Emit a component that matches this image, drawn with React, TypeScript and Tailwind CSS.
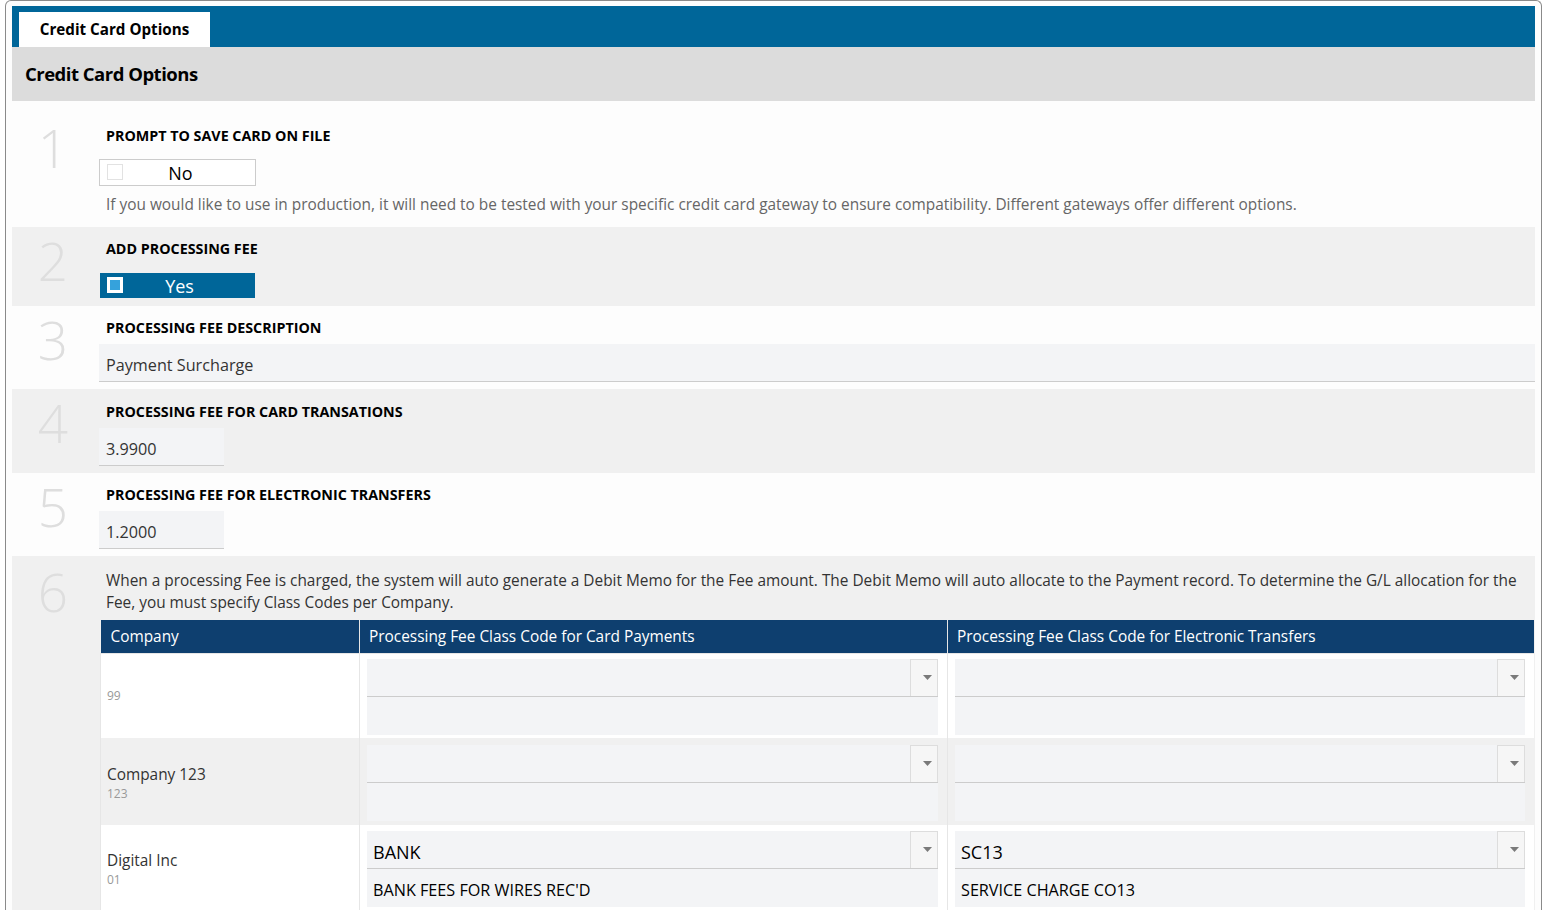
const FONT = "font-['Open_Sans','Noto_Sans',sans-serif]";

type CompanyRow = {
  name: string;
  code: string;
  pad: string;
  card: { code: string; desc: string };
  electronic: { code: string; desc: string };
};

const companies: CompanyRow[] = [
  { name: "", code: "99", pad: "pt-[5px] pb-[3px]", card: { code: "", desc: "" }, electronic: { code: "", desc: "" } },
  { name: "Company 123", code: "123", pad: "pt-[7px] pb-[4px]", card: { code: "", desc: "" }, electronic: { code: "", desc: "" } },
  {
    name: "Digital Inc",
    code: "01",
    pad: "pt-[6px] pb-[3px]",
    card: { code: "BANK", desc: "BANK FEES FOR WIRES REC'D" },
    electronic: { code: "SC13", desc: "SERVICE CHARGE CO13" },
  },
];

function StepNumber({ n, top }: { n: number; top: string }) {
  return (
    <div className={`w-[87px] shrink-0 pr-[5px] text-center text-[53px] leading-none font-light text-[#dedede] ${top}`}>
      {n}
    </div>
  );
}

function Label({ children }: { children: React.ReactNode }) {
  return <div className="pl-[7px] text-[14.3px] leading-5 font-bold text-black">{children}</div>;
}

function TextField({ value, width }: { value: string; width: string }) {
  return (
    <div className={`${width} mt-[6px] h-[38px] overflow-hidden border-b border-[#cccccc] bg-[#f3f4f6] pl-[7px] text-[16.2px] leading-[42px] text-[#333]`}>
      {value}
    </div>
  );
}

function ToggleButton({ on }: { on: boolean }) {
  return (
    <div
      className={
        on
          ? "relative mt-[14px] flex h-[25px] w-[155px] items-center justify-center bg-[#006699] pl-1 text-[18px] text-white"
          : "relative mt-[13px] flex h-[27px] w-[157px] items-center justify-center border border-[#cccccc] bg-white pl-[6px] text-[18px] text-black"
      }
    >
      <span
        className={
          on
            ? "absolute top-[4px] left-[7px] flex size-[16px] items-center justify-center border-2 border-white bg-white"
            : "absolute top-[4px] left-[7px] size-[16px] border border-[#e2e2e2] bg-white"
        }
      >
        {on ? <span className="size-[10px] bg-[#35a2dc]" /> : null}
      </span>
      <span className="leading-none">{on ? "Yes" : "No"}</span>
    </div>
  );
}

function ClassCodePicker({ code, desc, pad }: { code: string; desc: string; pad: string }) {
  return (
    <div className={`pr-[9px] pl-[7px] ${pad}`}>
      <div className="flex h-[38px] border-b border-[#cccccc] bg-[#f3f4f6]">
        <div className="flex-1 overflow-hidden pl-[6px] text-[18px] leading-[43px] text-black">{code}</div>
        <div className="flex w-[28px] items-center justify-center border border-b-0 border-[#dddddd] bg-[#f6f6f6] pl-[6px]">
          <svg width="9" height="5" viewBox="0 0 9 5">
            <path d="M0 0h9L4.5 5z" fill="#7a7a7a" />
          </svg>
        </div>
      </div>
      <div className="h-[38px] overflow-hidden bg-[#f3f4f6] pl-[6px] text-[16.2px] leading-[42px] text-black">{desc}</div>
    </div>
  );
}

export default function App() {
  return (
    <div className={`${FONT} h-[910px] w-full overflow-hidden bg-white`}>
      <div className="ml-[5px] h-full w-[1537px] rounded-t-[6px] border-x border-t border-[#8a8a8a] bg-[#fdfdfd] px-[6px] pt-[5px]">
        {/* tab strip */}
        <div className="flex h-[41px] items-end bg-[#006699] pl-[7px]">
          <div className="flex h-[35px] w-[191px] items-center justify-center bg-white text-[15.2px] font-bold text-black">
            Credit Card Options
          </div>
        </div>

        <div className="flex h-[54px] items-center bg-[#dcdcdc] pl-[13px] text-[18.5px] font-bold tracking-[-0.5px] text-black">
          Credit Card Options
        </div>

        {/* 1 */}
        <div className="flex h-[126px] bg-[#fdfdfd]">
          <StepNumber n={1} top="pt-[20px]" />
          <div className="flex-1 pt-[25px]">
            <Label>PROMPT TO SAVE CARD ON FILE</Label>
            <ToggleButton on={false} />
            <p className="mt-[8px] pl-[7px] text-[15.4px] leading-[21px] text-[#666]">
              If you would like to use in production, it will need to be tested with your specific credit card gateway to ensure compatibility. Different gateways offer different options.
            </p>
          </div>
        </div>

        {/* 2 */}
        <div className="flex h-[79px] bg-[#f0f0f0]">
          <StepNumber n={2} top="pt-[7px]" />
          <div className="flex-1 pt-[12px]">
            <Label>ADD PROCESSING FEE</Label>
            <div className="pl-px">
              <ToggleButton on />
            </div>
          </div>
        </div>

        {/* 3 */}
        <div className="flex h-[83px] bg-[#fdfdfd]">
          <StepNumber n={3} top="pt-[7px]" />
          <div className="flex-1 pt-[12px]">
            <Label>PROCESSING FEE DESCRIPTION</Label>
            <TextField value="Payment Surcharge" width="w-full" />
          </div>
        </div>

        {/* 4 */}
        <div className="flex h-[84px] bg-[#f0f0f0]">
          <StepNumber n={4} top="pt-[7px]" />
          <div className="flex-1 pt-[13px]">
            <Label>PROCESSING FEE FOR CARD TRANSATIONS</Label>
            <TextField value="3.9900" width="w-[125px]" />
          </div>
        </div>

        {/* 5 */}
        <div className="flex h-[83px] bg-[#fdfdfd]">
          <StepNumber n={5} top="pt-[7px]" />
          <div className="flex-1 pt-[12px]">
            <Label>PROCESSING FEE FOR ELECTRONIC TRANSFERS</Label>
            <TextField value="1.2000" width="w-[125px]" />
          </div>
        </div>

        {/* 6 */}
        <div className="flex bg-[#f0f0f0]">
          <StepNumber n={6} top="pt-[9px]" />
          <div className="flex-1 pt-[14px]">
            <p className="pl-[7px] text-[15.4px] leading-[22px] text-[#333]">
              When a processing Fee is charged, the system will auto generate a Debit Memo for the Fee amount. The Debit Memo will auto allocate to the Payment record. To determine the G/L allocation for the Fee, you must specify Class Codes per Company.
            </p>
            <table className="mt-[6px] ml-px w-[1434px] table-fixed border-collapse">
              <colgroup>
                <col className="w-[259px]" />
                <col className="w-[588px]" />
                <col />
              </colgroup>
              <thead>
                <tr className="h-[33px] bg-[#0e3f6f] text-left text-[15.4px] text-white">
                  <th className="border-b border-[#e6e6e6] pl-[10px] font-normal">Company</th>
                  <th className="border-b border-l border-[#e6e6e6] pl-[9px] font-normal">
                    Processing Fee Class Code for Card Payments
                  </th>
                  <th className="border-b border-l border-[#e6e6e6] pl-[9px] font-normal">
                    Processing Fee Class Code for Electronic Transfers
                  </th>
                </tr>
              </thead>
              <tbody>
                {companies.map((c, i) => (
                  <tr key={c.code} className={i % 2 === 1 ? "bg-[#f0f0f0]" : "bg-white"}>
                    <td className="border-l border-[#e6e6e6] pl-[6px] align-middle">
                      {c.name ? <div className="pt-[6px] text-[15.4px] leading-5 text-[#333]">{c.name}</div> : null}
                      <div className="text-[12px] leading-[18px] text-[#999]">{c.code}</div>
                    </td>
                    <td className="border-l border-[#e6e6e6] p-0">
                      <ClassCodePicker code={c.card.code} desc={c.card.desc} pad={c.pad} />
                    </td>
                    <td className="border-l border-[#e6e6e6] p-0">
                      <ClassCodePicker code={c.electronic.code} desc={c.electronic.desc} pad={c.pad} />
                    </td>
                  </tr>
                ))}
              </tbody>
            </table>
          </div>
        </div>
      </div>
    </div>
  );
}
